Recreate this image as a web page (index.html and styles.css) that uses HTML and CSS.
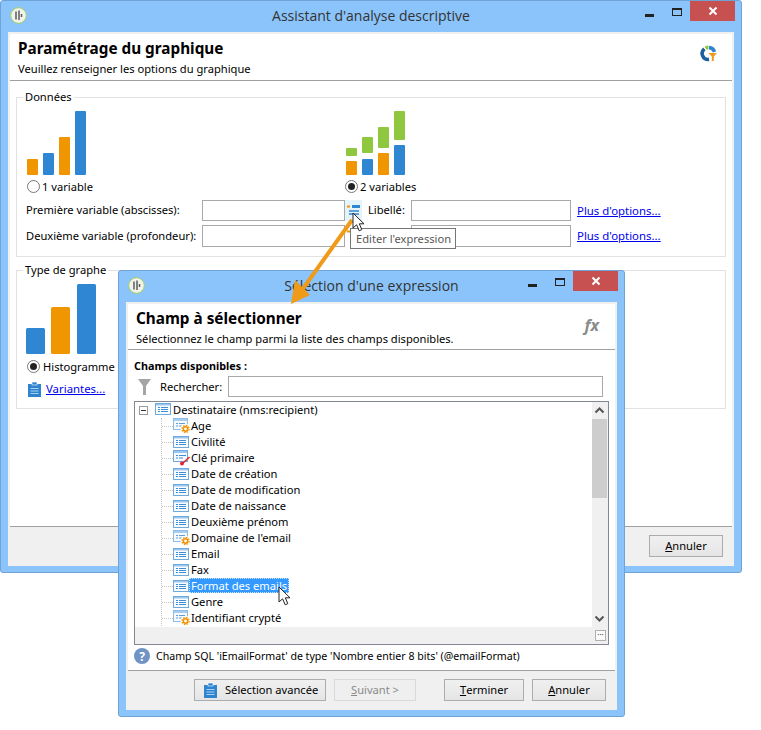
FILE: index.html
```html
<!DOCTYPE html>
<html lang="fr">
<head>
<meta charset="utf-8">
<title>Assistant d'analyse descriptive</title>
<link rel="stylesheet" href="styles.css">
</head>
<body>
<svg class="defs" width="0" height="0" aria-hidden="true">
  <symbol id="field" viewBox="0 0 16 12">
    <rect x=".5" y=".5" width="15" height="11" fill="#fafcfe" stroke="#6fa9de"/>
    <rect x="1" y="1" width="14" height="1.500" fill="#9cc6ec"/>
    <path d="M3 4.500h2M6 4.500h7M3 6.500h2M6 6.500h7M3 8.500h2M6 8.500h7" stroke="#3f8fd8" stroke-width="1"/>
  </symbol>
  <symbol id="gear" viewBox="0 0 18 16">
    <rect x=".5" y=".5" width="14" height="11" fill="#f6fafd" stroke="#8cbde9"/>
    <rect x="1" y="1" width="13" height="2" fill="#a9cdee"/>
    <path d="M3 5.500h2M6 5.500h6M3 8h2M6 8h3" stroke="#5fa0da"/>
    <circle cx="12.500" cy="11" r="5" fill="#fff"/>
    <circle cx="12.500" cy="11" r="2.200" fill="#fff" stroke="#ef9100" stroke-width="1.600"/>
    <circle cx="12.500" cy="11" r="3.600" fill="none" stroke="#ef9100" stroke-width="1.200" stroke-dasharray="1.600 1.200"/>
  </symbol>
  <symbol id="key" viewBox="0 0 18 16">
    <rect x=".5" y=".5" width="14" height="11" fill="#f6fafd" stroke="#6fa9de"/>
    <rect x="1" y="1" width="13" height="2" fill="#9cc6ec"/>
    <path d="M3 5.500h2M6 5.500h7M3 8h2M6 8h4" stroke="#3f8fd8"/>
    <path d="M16.500 7 L10 13" stroke="#e3262e" stroke-width="1.600"/>
    <circle cx="9" cy="13.500" r="2" fill="#e3262e"/>
  </symbol>
  <symbol id="clip" viewBox="0 0 13 16">
    <path d="M0 3h4V1h5v2h4v13H0z" fill="#2f84d0"/>
    <rect x="4" y="1" width="5" height="3" fill="#2f84d0" stroke="#fff" stroke-width=".6"/>
    <path d="M2.500 7.500h8M2.500 10h8M2.500 12.500h8" stroke="#a9d0f0"/>
  </symbol>
  <symbol id="cursor" viewBox="0 0 14 20">
    <path d="M1 1 V16 L4.600 12.800 L7.200 18.800 L9.800 17.600 L7.300 11.800 H12 Z" fill="#fff" stroke="#222" stroke-width="1" stroke-linejoin="round"/>
  </symbol>
  <symbol id="appicon" viewBox="0 0 17 17">
    <circle cx="8.500" cy="8.500" r="7.800" fill="#f2f2ee" stroke="#a5cf5a" stroke-width="1"/>
    <path d="M6 4.500v8M9 3.500v9.500M11.500 7v3" stroke="#5c5e5b" stroke-width="1.500"/>
  </symbol>
</svg>

<section class="window main-window">
  <header class="titlebar">
    <svg class="appicon"><use href="#appicon"/></svg>
    <span class="title">Assistant d'analyse descriptive</span>
    <div class="controls">
      <span class="ctl-min"></span><span class="ctl-max"></span><span class="ctl-close"><svg width="10" height="10" viewBox="0 0 10 10"><path d="M1.500 1.500l7 7M8.500 1.500l-7 7" stroke="#fff" stroke-width="2"/></svg></span>
    </div>
  </header>
  <div class="client">
    <div class="head main-head">
      <div>
        <h1>Paramétrage du graphique</h1>
        <p>Veuillez renseigner les options du graphique</p>
      </div>
      <svg class="logo" width="17" height="17" viewBox="0 0 17 17">
        <path d="M9 2.600 A6 6 0 0 1 14.400 7" fill="none" stroke="#2f84d0" stroke-width="3.600"/>
        <path d="M5.600 3.200 A6 6 0 0 1 8.400 2.400" fill="none" stroke="#8fc73e" stroke-width="3.600"/>
        <path d="M4.400 3.800 A6 6 0 0 0 9 14.400" fill="none" stroke="#1f5f9e" stroke-width="3.600"/>
        <path d="M8.500 8h8.500l-3.200 3.600V16h-2v-4.400z" fill="#f09a1a"/>
      </svg>
    </div>
    <div class="body main-body">
      <fieldset class="group group-data">
        <legend>Données</legend>
        <div class="charts">
          <div class="chart-col">
            <svg class="chart" width="62" height="65" viewBox="0 0 62 65">
              <rect x="0" y="48" width="11" height="16" rx="1" fill="#ef9600"/>
              <rect x="16" y="42" width="11" height="22" rx="1" fill="#2f86d2"/>
              <rect x="32" y="26" width="11" height="38" rx="1" fill="#ef9600"/>
              <rect x="48" y="0" width="11" height="64" rx="1" fill="#2f86d2"/>
            </svg>
            <label class="radio-line"><span class="radio"></span>1 variable</label>
          </div>
          <div class="chart-col">
            <svg class="chart" width="62" height="65" viewBox="0 0 62 65">
              <rect x="1" y="50" width="11" height="14" rx="1" fill="#ef9600"/>
              <rect x="1" y="37" width="11" height="8" rx="1" fill="#8fc73e"/>
              <rect x="17" y="48" width="11" height="16" rx="1" fill="#2f86d2"/>
              <rect x="17" y="26" width="11" height="16" rx="1" fill="#8fc73e"/>
              <rect x="33" y="42" width="11" height="22" rx="1" fill="#ef9600"/>
              <rect x="33" y="16" width="11" height="21" rx="1" fill="#8fc73e"/>
              <rect x="49" y="34" width="11" height="30" rx="1" fill="#2f86d2"/>
              <rect x="49" y="0" width="11" height="29" rx="1" fill="#8fc73e"/>
            </svg>
            <label class="radio-line"><span class="radio checked"></span>2 variables</label>
          </div>
        </div>
        <div class="fields">
          <span class="flabel">Première variable (abscisses):</span>
          <input class="input" type="text">
          <span class="expr-btn hover"><svg width="15" height="14" viewBox="0 0 15 14"><path d="M1 2.500h3" stroke="#ef9600" stroke-width="2"/><rect x="6" y="1" width="8" height="3" fill="#2f86d2"/><path d="M3 7h10M3 10h10" stroke="#2f86d2" stroke-width="1.500"/></svg></span>
          <span class="lbl flabel">Libellé:</span>
          <input class="input" type="text">
          <a class="link" href="#">Plus d'options...</a>

          <span class="flabel">Deuxième variable (profondeur):</span>
          <input class="input" type="text">
          <span class="expr-btn"><svg width="15" height="14" viewBox="0 0 15 14"><path d="M1 2.500h3" stroke="#ef9600" stroke-width="2"/><rect x="6" y="1" width="8" height="3" fill="#2f86d2"/></svg></span>
          <span class="lbl"></span>
          <input class="input" type="text">
          <a class="link" href="#">Plus d'options...</a>
        </div>
      </fieldset>
      <fieldset class="group group-type">
        <legend>Type de graphe</legend>
        <svg class="chart chart-type" width="72" height="72" viewBox="0 0 72 72">
          <rect x="0" y="44" width="19" height="26" rx="1.500" fill="#2f86d2"/>
          <rect x="25" y="23" width="19" height="47" rx="1.500" fill="#ef9600"/>
          <rect x="51" y="0" width="19" height="70" rx="1.500" fill="#2f86d2"/>
        </svg>
        <label class="radio-line hist"><span class="radio checked"></span>Histogramme</label>
        <div class="variants"><svg width="13" height="16"><use href="#clip"/></svg><a class="link" href="#">Variantes...</a></div>
      </fieldset>
    </div>
    <footer class="foot">
      <button class="btn btn-74" type="button"><u>A</u>nnuler</button>
    </footer>
  </div>
</section>

<div class="tooltip">Editer l'expression</div>

<section class="window sub-window">
  <header class="titlebar">
    <svg class="appicon"><use href="#appicon"/></svg>
    <span class="title">Sélection d'une expression</span>
    <div class="controls">
      <span class="ctl-min"></span><span class="ctl-max"></span><span class="ctl-close"><svg width="10" height="10" viewBox="0 0 10 10"><path d="M1.500 1.500l7 7M8.500 1.500l-7 7" stroke="#fff" stroke-width="2"/></svg></span>
    </div>
  </header>
  <div class="client">
    <div class="head sub-head">
      <div>
        <h1>Champ à sélectionner</h1>
        <p>Sélectionnez le champ parmi la liste des champs disponibles.</p>
      </div>
      <span class="fx">fx</span>
    </div>
    <div class="body sub-body">
      <strong class="avail">Champs disponibles :</strong>
      <div class="search">
        <svg class="funnel" width="14" height="16" viewBox="0 0 14 16"><path d="M0 0h13L8 7v9H5V7z" fill="#a5a5a5"/></svg>
        <span class="search-lbl">Rechercher:</span>
        <input class="input search-input" type="text">
      </div>
      <div class="tree">
        <div class="tree-pane">
          <div class="root-row">
            <span class="expander"></span>
            <svg class="root-icon" width="16" height="12"><use href="#field"/></svg>
            <span class="root-text">Destinataire (nms:recipient)</span>
          </div>
          <ul class="children">
            <li><svg width="18" height="16"><use href="#gear"/></svg><span>Age</span></li>
            <li><svg width="18" height="16"><use href="#field" width="16" height="12" y="2"/></svg><span>Civilité</span></li>
            <li><svg width="18" height="16"><use href="#key"/></svg><span>Clé primaire</span></li>
            <li><svg width="18" height="16"><use href="#field" width="16" height="12" y="2"/></svg><span>Date de création</span></li>
            <li><svg width="18" height="16"><use href="#field" width="16" height="12" y="2"/></svg><span>Date de modification</span></li>
            <li><svg width="18" height="16"><use href="#field" width="16" height="12" y="2"/></svg><span>Date de naissance</span></li>
            <li><svg width="18" height="16"><use href="#field" width="16" height="12" y="2"/></svg><span>Deuxième prénom</span></li>
            <li><svg width="18" height="16"><use href="#gear"/></svg><span>Domaine de l'email</span></li>
            <li><svg width="18" height="16"><use href="#field" width="16" height="12" y="2"/></svg><span>Email</span></li>
            <li><svg width="18" height="16"><use href="#field" width="16" height="12" y="2"/></svg><span>Fax</span></li>
            <li><svg width="18" height="16"><use href="#field" width="16" height="12" y="2"/></svg><span class="selected">Format des emails</span></li>
            <li><svg width="18" height="16"><use href="#field" width="16" height="12" y="2"/></svg><span>Genre</span></li>
            <li><svg width="18" height="16"><use href="#gear"/></svg><span>Identifiant crypté</span></li>
          </ul>
        </div>
        <div class="vscroll">
          <svg class="arrow-btn" width="15" height="17" viewBox="0 0 15 17"><path d="M3.500 10.500l4-4 4 4" fill="none" stroke="#555" stroke-width="2"/></svg>
          <span class="thumb"></span>
          <svg class="arrow-btn arrow-down" width="15" height="17" viewBox="0 0 15 17"><path d="M3.500 6.500l4 4 4-4" fill="none" stroke="#555" stroke-width="2"/></svg>
        </div>
        <div class="hstrip"><span class="grip">···</span></div>
      </div>
      <div class="status">
        <svg width="16" height="16" viewBox="0 0 16 16"><circle cx="8" cy="8" r="8" fill="#6f93c4"/><text x="8" y="12.500" text-anchor="middle" class="qmark">?</text></svg>
        <span class="status-text">Champ SQL 'iEmailFormat' de type 'Nombre entier 8 bits' (@emailFormat)</span>
      </div>
    </div>
    <footer class="foot sub-foot">
      <button class="btn btn-adv" type="button"><svg width="13" height="16"><use href="#clip"/></svg>Sélection avancée</button>
      <button class="btn btn-next" type="button" disabled><u>S</u>uivant &gt;</button>
      <button class="btn btn-finish" type="button"><u>T</u>erminer</button>
      <button class="btn btn-74" type="button"><u>A</u>nnuler</button>
    </footer>
  </div>
</section>

<svg class="callout" width="90" height="100" viewBox="0 0 90 100">
  <path d="M68 2 L18 72" stroke="#f09a1a" stroke-width="4" fill="none"/>
  <path d="M7 86 L11 62 L26 77 Z" fill="#f09a1a"/>
</svg>
<svg class="cursor cursor-a" width="14" height="20"><use href="#cursor"/></svg>
<svg class="cursor cursor-b" width="14" height="20"><use href="#cursor"/></svg>
</body>
</html>
```

FILE: styles.css
```css
* { box-sizing: border-box; }
html, body { margin: 0; padding: 0; }
body {
  position: relative;
  width: 761px;
  height: 730px;
  overflow: hidden;
  background: #fff;
  font: 11.15px/15px "Noto Sans", "DejaVu Sans", sans-serif;
  color: #000;
}
.defs { position: absolute; }
.window {
  position: absolute;
  display: flex;
  flex-direction: column;
  background: #8ac4fa;
  border: 1px solid #6fa3d6;
  border-radius: 3px;
  padding: 0 7px 6px;
}
.main-window { left: 0; top: 0; width: 742px; height: 573px; }
.sub-window { left: 118px; top: 270px; width: 507px; height: 447px; }
.titlebar {
  position: relative;
  display: flex;
  align-items: center;
  justify-content: center;
  height: 31px;
  flex: none;
  padding-bottom: 2px;
}
.appicon { position: absolute; left: 2px; top: 6px; width: 17px; height: 17px; }
.title {
  font: 14px/20px "Open Sans", sans-serif;
  color: #333;
}
.controls {
  position: absolute;
  right: -1px;
  top: 0;
  display: flex;
  align-items: flex-start;
}
.ctl-min { width: 9px; height: 3px; background: #222; margin: 13px 18px 0 0; }
.ctl-max { width: 10px; height: 8px; border: 1px solid #222; border-top-width: 2px; margin: 7px 8px 0 0; }
.ctl-close {
  width: 45px;
  height: 20px;
  background: #c75050;
  display: flex;
  align-items: center;
  justify-content: center;
}
.client {
  flex: 1;
  min-height: 0;
  display: flex;
  flex-direction: column;
  background: #fff;
  border: 2px solid #f0f0f0;
  border-bottom: 0;
}
.head {
  flex: none;
  display: flex;
  justify-content: space-between;
  border-bottom: 1px solid #a0a0a0;
}
.main-head { height: 47px; padding: 5px 15px 0 8px; }
.sub-head { height: 46px; padding: 5px 16px 0 8px; }
.head h1 { margin: 0 0 3px; font: bold 15.3px/19px "Noto Sans", sans-serif; }
.head p { margin: 0; }
.logo { margin-top: 6px; }
.fx { font: italic bold 16px/20px "Noto Sans", sans-serif; color: #8a8a8a; margin-top: 6px; }
.body { flex: 1; min-height: 0; }
.main-body { padding: 8px 6px 0; display: flex; flex-direction: column; gap: 5px; }
.group {
  margin: 0;
  padding: 0 0 0 10px;
  border: 1.5px solid #e2e2e2;
  min-width: 0;
}
.group legend { margin-left: -4px; padding: 0 2px 2px; line-height: 15px; }
.group-data { height: 168px; }
.group-type { height: 147px; }
.charts { display: grid; grid-template-columns: 318px 1fr; margin-top: 5px; }
.chart-col { display: flex; flex-direction: column; }
.chart { display: block; }
.radio-line { display: flex; align-items: center; gap: 2px; height: 15px; margin-top: 3px; }
.radio {
  width: 13px;
  height: 13px;
  border-radius: 50%;
  border: 1px solid #777;
  background: #fff;
  position: relative;
  flex: none;
}
.radio.checked::after {
  content: "";
  position: absolute;
  left: 2px;
  top: 2px;
  width: 7px;
  height: 7px;
  border-radius: 50%;
  background: #222;
}
.fields {
  display: grid;
  grid-template-columns: 176px 143px 17px 6px 43px 160px auto;
  grid-template-rows: 21px 22px;
  row-gap: 4px;
  margin-top: 6px;
  align-items: center;
  margin-left: -1px;
  width: 680px;
  white-space: nowrap;
}
.flabel { padding-bottom: 2px; }
.fields .lbl { grid-column: 5; }
.fields > .input { height: 100%; }
.input {
  border: 1px solid #a9a9a9;
  background: #fff;
  margin: 0;
  padding: 0;
  display: block;
  width: 100%;
  font: inherit;
  outline: none;
}
.expr-btn { display: flex; justify-content: center; align-items: center; height: 21px; }
.expr-btn.hover { background: #e5f3fb; }
.link { color: #0000ee; text-decoration: underline; margin-left: 6px; white-space: nowrap; font-size: 11.4px; padding-bottom: 1px; }
.chart-type { margin: 5px 0 0 -1px; }
.hist { gap: 3px; margin-top: 3px; }
.variants { display: flex; align-items: center; gap: 5px; margin-top: 7px; margin-left: 1px; }
.variants .link { margin-left: 0; }
.foot {
  flex: none;
  display: flex;
  justify-content: flex-end;
  align-items: center;
  background: #f0f0f0;
  height: 40px;
  padding: 0 9px 2px 0;
  border-top: 1px solid #a0a0a0;
}
.sub-foot { gap: 8px; }
.btn {
  height: 22px;
  padding: 0;
  border: 1px solid #acacac;
  background: linear-gradient(#f0f0f0, #e5e5e5);
  font: inherit;
  color: #000;
  display: flex;
  align-items: center;
  justify-content: center;
}
.btn-74 { width: 74px; }
.btn-finish { width: 80px; margin-left: 20px; }
.btn-next { width: 82px; color: #8a8a8a; border-color: #d9d9d9; background: #efefef; }
.btn-adv { width: 132px; gap: 8px; padding-left: 9px; justify-content: flex-start; }
.sub-body { padding: 8px 6px 0; display: flex; flex-direction: column; }
.avail { line-height: 15px; font-size: 10.8px; }
.search { display: flex; align-items: center; margin-top: 3px; height: 21px; }
.funnel { margin-left: 4px; }
.search-lbl { margin-left: 8px; width: 68px; }
.search-input { width: 375px; height: 21px; }
.tree {
  position: relative;
  margin-top: 4px;
  width: 475px;
  height: 244px;
  border: 1px solid #828790;
  display: grid;
  grid-template-columns: 1fr 16px;
  grid-template-rows: 1fr 17px;
}
.tree-pane { position: relative; overflow: hidden; }
.root-row { display: flex; align-items: center; height: 16px; padding-left: 4px; }
.root-text { padding-bottom: 2px; }
.expander {
  position: relative;
  width: 9px;
  height: 9px;
  border: 1px solid #999;
  margin-right: 7px;
}
.expander::after { content: ""; position: absolute; left: 1px; top: 3px; width: 5px; height: 1px; background: #333; }
.root-icon { margin: 0 2px 2px 0; }
.children {
  list-style: none;
  margin: 0 0 0 26px;
  padding: 0;
  border-left: 1px dotted #c4c4c4;
}
.children li { display: flex; align-items: flex-start; height: 16px; padding-left: 11px; position: relative; }
.children li::before {
  content: "";
  position: absolute;
  left: 0;
  top: 8px;
  width: 11px;
  border-top: 1px dotted #c4c4c4;
}
.children li svg { flex: none; position: relative; margin-right: -2px; }
.children li span { padding: 0 2px; line-height: 15px; white-space: nowrap; position: relative; }
.selected { background: #3399ff; color: #fff; outline: 1px dotted #cde6ff; outline-offset: -1px; }
.vscroll {
  grid-row: 1;
  grid-column: 2;
  background: #f0f0f0;
  display: flex;
  flex-direction: column;
}
.thumb { width: 15px; height: 79px; background: #cdcdcd; }
.arrow-btn { flex: none; }
.arrow-down { margin-top: auto; }
.hstrip {
  grid-row: 2;
  grid-column: 1 / 3;
  background: #f0f0f0;
  display: flex;
  justify-content: flex-end;
  align-items: center;
  padding-right: 2px;
}
.grip {
  width: 11px;
  height: 11px;
  border: 1px solid #b0b0b0;
  background: #fafafa;
  font-size: 8px;
  line-height: 8px;
  text-align: center;
  color: #444;
}
.status { display: flex; align-items: center; gap: 6px; margin-top: 3px; height: 16px; }
.status-text { font-size: 10.6px; }
.qmark { fill: #fff; font: bold 12px "Noto Sans", sans-serif; }
.tooltip {
  position: absolute;
  left: 350px;
  top: 228px;
  width: 106px;
  height: 21px;
  border: 1px solid #767676;
  background: #fff;
  color: #575757;
  padding: 2px 0 0 5px;
  white-space: nowrap;
}
.callout { position: absolute; left: 284px; top: 218px; }
.cursor { position: absolute; }
.cursor-a { left: 352px; top: 212px; }
.cursor-b { left: 278px; top: 586px; }
```
